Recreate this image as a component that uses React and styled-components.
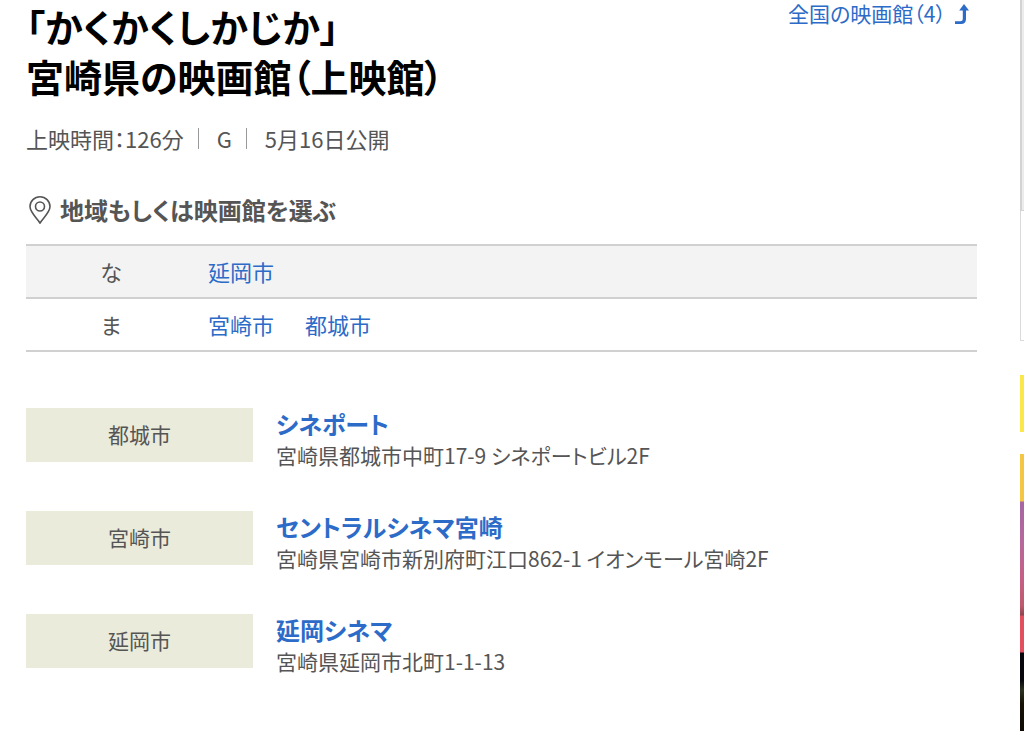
import React from "react";
import styled, { createGlobalStyle, ThemeProvider } from "styled-components";

const theme = {
    text: "#555555",
    link: "#2d6bc8",
    line: "#d0d0d0",
    stripe: "#f3f3f3",
    label: "#eaebda"
};

const areas = [
    { kana: "な", cities: ["延岡市"] },
    { kana: "ま", cities: ["宮崎市", "都城市"] }
];

const theaters = [
    {
        city: "都城市",
        name: "シネポート",
        address: "宮崎県都城市中町17-9 シネポートビル2F"
    },
    {
        city: "宮崎市",
        name: "セントラルシネマ宮崎",
        address: "宮崎県宮崎市新別府町江口862-1 イオンモール宮崎2F"
    },
    {
        city: "延岡市",
        name: "延岡シネマ",
        address: "宮崎県延岡市北町1-1-13"
    }
];

function App() {
    return (
        <ThemeProvider theme={theme}>
            <GlobalStyle />
            <Page>
                <Main>
                    <Header>
                        <Title>
                            「かくかくしかじか」
                            <br />
                            宮崎県の映画館（上映館）
                        </Title>
                        <AllLink href="#all">
                            全国の映画館（4）
                            <UpArrow viewBox="0 0 14 20" aria-hidden="true">
                                <path d="M9 0 L14 6.5 H11 V15 Q11 20 6 20 H0 V17.3 H5.5 Q7.8 17.3 7.8 15 V6.5 H4.2 Z" />
                            </UpArrow>
                        </AllLink>
                    </Header>
                    <Info>
                        <InfoItem>上映時間：126分</InfoItem>
                        <InfoItem>G</InfoItem>
                        <InfoItem>5月16日公開</InfoItem>
                    </Info>
                    <SectionTitle>
                        <Pin viewBox="0 0 22 28" aria-hidden="true">
                            <path d="M11 27 C8 22 1 16.5 1 10.6 A10 9.8 0 0 1 21 10.6 C21 16.5 14 22 11 27 Z" />
                            <circle cx="11" cy="10.5" r="4.5" />
                        </Pin>
                        地域もしくは映画館を選ぶ
                    </SectionTitle>
                    <AreaTable>
                        <tbody>
                            {areas.map(area => (
                                <AreaRow key={area.kana}>
                                    <AreaHead scope="row">{area.kana}</AreaHead>
                                    <AreaCell>
                                        <Cities>
                                            {area.cities.map(city => (
                                                <Link
                                                    key={city}
                                                    href={`#${city}`}
                                                >
                                                    {city}
                                                </Link>
                                            ))}
                                        </Cities>
                                    </AreaCell>
                                </AreaRow>
                            ))}
                        </tbody>
                    </AreaTable>
                    <TheaterList>
                        {theaters.map(theater => (
                            <Theater key={theater.name} id={theater.city}>
                                <CityLabel>{theater.city}</CityLabel>
                                <div>
                                    <TheaterName>
                                        <Link href="#theater">
                                            {theater.name}
                                        </Link>
                                    </TheaterName>
                                    <Address>{theater.address}</Address>
                                </div>
                            </Theater>
                        ))}
                    </TheaterList>
                </Main>
                <Side>
                    <AdFrame />
                    <AdCaption />
                    <YellowBanner />
                    <Poster />
                </Side>
            </Page>
        </ThemeProvider>
    );
}

// Styled Components
const GlobalStyle = createGlobalStyle`
    * {
        box-sizing: border-box;
    }
    body {
        margin: 0;
        background: #fff;
        color: ${props => props.theme.text};
        font-family: "Noto Sans CJK JP", sans-serif;
        font-size: 22px;
        font-feature-settings: "palt";
    }
`;

const Page = styled.div`
    display: flex;
    min-height: 100vh;
`;

const Main = styled.main`
    flex: 1;
    min-width: 0;
    padding: 1px 43px 0 26px;
`;

const Header = styled.header`
    display: flex;
    justify-content: space-between;
    align-items: flex-start;
`;

const Title = styled.h1`
    margin: 0;
    color: #000;
    font-size: 38px;
    line-height: 50px;
`;

const Link = styled.a`
    color: ${props => props.theme.link};
    text-decoration: none;
    &:hover {
        text-decoration: underline;
    }
`;

const AllLink = styled(Link)`
    display: flex;
    align-items: center;
    gap: 9px;
    padding-right: 8px;
    font-size: 21px;
    line-height: 25px;
`;

const UpArrow = styled.svg`
    width: 14px;
    height: 20px;
    fill: currentColor;
`;

const Info = styled.ul`
    display: flex;
    align-items: center;
    margin: 21px 0 0;
    padding: 0;
    list-style: none;
    line-height: 32px;
`;

const InfoItem = styled.li`
    display: flex;
    align-items: center;
    & + &::before {
        content: "";
        height: 21px;
        margin: 0 18px 0 14px;
        border-left: 1px solid #999;
    }
`;

const SectionTitle = styled.h2`
    display: flex;
    align-items: center;
    gap: 9px;
    margin: 40px 0 18px;
    padding-left: 3px;
    font-size: 24px;
    line-height: 32px;
`;

const Pin = styled.svg`
    width: 22px;
    height: 28px;
    fill: none;
    stroke: currentColor;
    stroke-width: 1.6;
`;

const AreaTable = styled.table`
    width: 100%;
    border-collapse: collapse;
    line-height: 32px;
`;

const AreaRow = styled.tr`
    height: 53px;
    border-top: 2px solid ${props => props.theme.line};
    border-bottom: 2px solid ${props => props.theme.line};
    &:nth-child(odd) {
        background: ${props => props.theme.stripe};
    }
`;

const AreaHead = styled.th`
    width: 170px;
    padding: 0 0 2px;
    font-weight: normal;
    text-align: center;
`;

const AreaCell = styled.td`
    padding: 0 12px 2px;
`;

const Cities = styled.div`
    display: flex;
    gap: 31px;
`;

const TheaterList = styled.ul`
    display: flex;
    flex-direction: column;
    gap: 40px;
    margin: 56px 0 0;
    padding: 0;
    list-style: none;
`;

const Theater = styled.li`
    display: grid;
    grid-template-columns: 227px 1fr;
    align-items: start;
    column-gap: 23px;
`;

const CityLabel = styled.div`
    padding-bottom: 2px;
    background: ${props => props.theme.label};
    font-size: 21px;
    line-height: 52px;
    text-align: center;
`;

const TheaterName = styled.h3`
    margin: 0;
    font-size: 24px;
    line-height: 31px;
`;

const Address = styled.p`
    margin: 0;
    font-size: 21px;
    line-height: 32px;
`;

const Side = styled.aside`
    display: flex;
    flex-direction: column;
    flex: 0 0 4px;
`;

const AdFrame = styled.div`
    height: 211px;
    background: #ececec;
    border-left: 2px solid #d3d3d3;
    border-bottom: 1px solid #d3d3d3;
`;

const AdCaption = styled.div`
    height: 130px;
    border-left: 1px solid #dadada;
    border-bottom: 1px solid #dadada;
`;

const YellowBanner = styled.div`
    height: 57px;
    margin: 34px 0 22px;
    background: #fae74a;
`;

const Poster = styled.div`
    flex: 1;
    background: linear-gradient(
        #f5c644 47px,
        #a566a2 48px,
        #b8689a 90px,
        #c65f84 125px,
        #bd5a6c 152px,
        #8e4550 161px,
        #e24f5f 162px,
        #e24f5f 198px,
        #07060d 199px,
        #07060d 226px,
        #2c3220 236px,
        #161006 250px,
        #0e0903
    );
`;

export default App;
